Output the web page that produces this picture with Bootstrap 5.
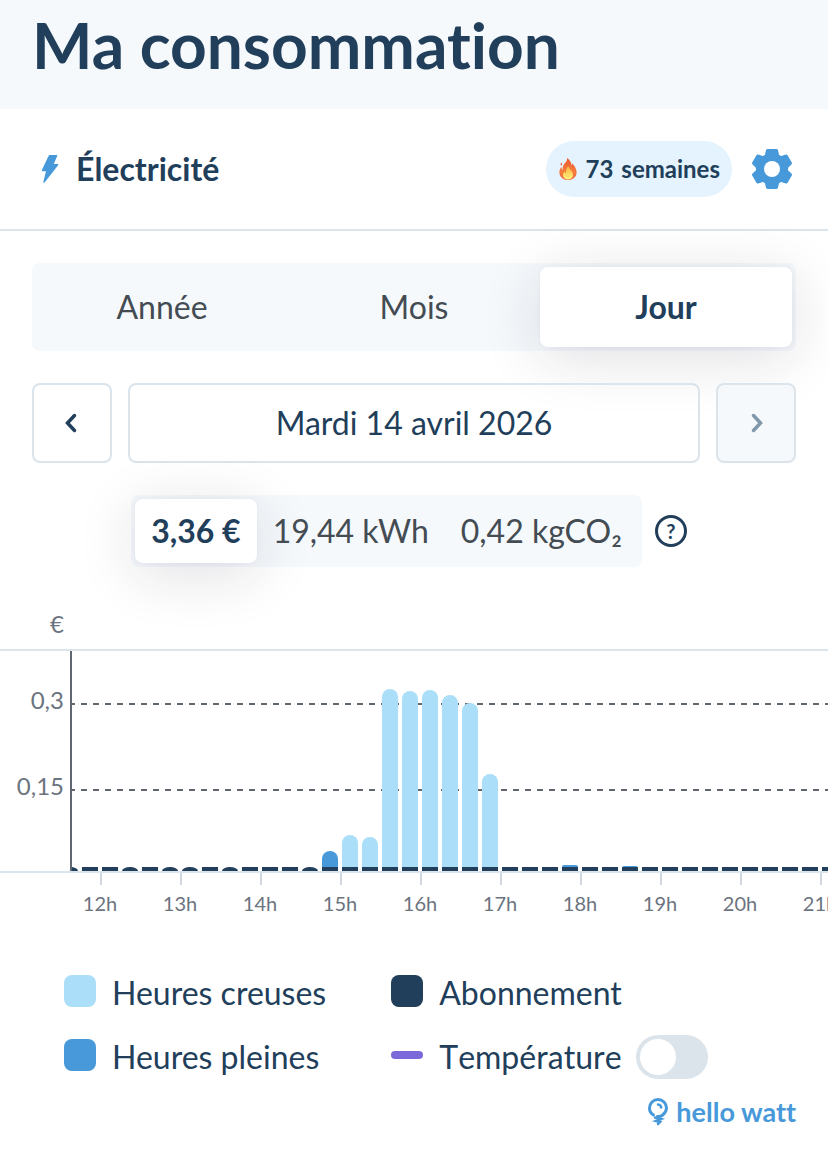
<!DOCTYPE html>
<html lang="fr">
<head>
<meta charset="utf-8">
<meta name="viewport" content="width=device-width, initial-scale=1">
<title>Ma consommation</title>
<link href="https://cdn.jsdelivr.net/npm/bootstrap@5.3.0/dist/css/bootstrap.min.css" rel="stylesheet">
<style>
  :root {
    --navy: #213e5a;
    --blue: #4799da;
    --sky: #abdef9;
    --mist: #f5f9fc;
    --line: #dbe4eb;
    --grey: #6b7480;
    --ink: #444c53;
    --lift: 0 0 4px rgba(30, 40, 60, .04), 0 10px 60px rgba(30, 30, 50, .14);
  }
  body { font-family: Lato, "Liberation Sans", sans-serif; color: var(--navy); font-size: 32px; line-height: 40px; font-variant-ligatures: none; overflow-x: hidden; }
  button { font: inherit; color: inherit; background: transparent; border: 0; padding: 0; }
  svg { display: block; flex: none; }
  .page-head { background: var(--mist); padding: 5px 32px 24px; }
  .page-head h1 { font-size: 64px; line-height: 80px; font-weight: 700; }
  .energy-head { height: 122px; padding: 0 32px; border-bottom: 2px solid var(--line); }
  .energy-head h2 { font-size: 32px; line-height: 40px; font-weight: 700; font-kerning: none; }
  .streak { height: 56px; padding: 0 12px; background: #e4f3fd; font-size: 24px; font-weight: 700; white-space: nowrap; }
  .panel-body { padding: 32px 32px 0; }
  .segments { background: var(--mist); border-radius: 8px; padding: 4px; color: var(--ink); }
  .segments button { border-radius: 8px; }
  .segments .active { background: #fff; color: var(--navy); font-weight: 700; box-shadow: var(--lift); }
  .period button { height: 80px; }
  .units button { height: 64px; padding: 0 16px; white-space: nowrap; }
  .boxed { height: 80px; border: 2px solid var(--line); border-radius: 8px; }
  .square { width: 80px; }
  .boxed:disabled { background: var(--mist); color: #7f98ac; position: relative; }
  .help { width: 32px; height: 32px; border: 3px solid var(--navy); font-size: 20px; line-height: 26px; font-weight: 700; margin: 0 10px 0 13px; }
  .chart { display: grid; grid-template-columns: 70px minmax(0, 1fr); color: var(--grey); font-size: 24px; line-height: 30px; margin-top: 42px; }
  .unit-name { grid-column: 1 / -1; height: 42px; border-bottom: 2px solid var(--line); }
  .unit-name span { display: block; width: 64px; text-align: right; }
  .y-labels { padding: 34px 6px 0 0; text-align: right; display: flex; flex-direction: column; gap: 56px; }
  .plot {
    height: 220px; border-left: 2px solid #5f6770; overflow: hidden;
    background:
      repeating-linear-gradient(90deg, #5f6770 0 6px, transparent 6px 12px) -3px 52px / 12px 2px repeat-x,
      repeating-linear-gradient(90deg, #5f6770 0 6px, transparent 6px 12px) -3px 138px / 12px 2px repeat-x;
  }
  .bars { height: 100%; gap: 4px; margin-left: -10px; }
  .bars i { flex: none; width: 16px; height: 4px; background: linear-gradient(var(--navy), var(--navy)) bottom / 100% 4px no-repeat var(--sky); }
  .bars .dome { border-radius: 8px 8px 0 0 / 4px 4px 0 0; }
  .bars .off, .bars .peak { border-radius: 8px 8px 0 0; }
  .bars .peak, .bars .trace { background-color: var(--blue); }
  .bars .trace { border-radius: 2px 2px 0 0; }
  .x-axis { grid-column: 1 / -1; border-top: 2px solid var(--line); padding-left: 60px; overflow: hidden; font-size: 20px; line-height: 24px; }
  .x-axis span { flex: none; width: 80px; text-align: center; }
  .x-axis span::before { content: ""; display: block; width: 2px; height: 12px; margin: 0 0 6px 40px; background: #cfd8e0; }
  .legend-grid { display: grid; grid-template-columns: auto auto; grid-auto-rows: 44px; justify-content: start; column-gap: 65px; row-gap: 20px; margin: 56px 32px 0 64px; }
  .swatch { flex: none; width: 32px; height: 32px; border-radius: 8px; margin: 0 16px 4px 0; }
  .swatch.dash { height: 8px; border-radius: 4px; background: #7b68d9; }
  .legend-grid label { font-kerning: none; }
  .legend-grid .form-check-input {
    width: 72px; height: 44px; margin: 0 0 0 14px; border: 0; float: none;
    background-color: var(--line); background-size: 44px 44px;
    background-image: url("data:image/svg+xml,%3csvg xmlns='http://www.w3.org/2000/svg' viewBox='0 0 44 44'%3e%3ccircle cx='22' cy='22' r='18' fill='%23fff'/%3e%3c/svg%3e");
  }
  .legend-grid .form-check-input:checked { background-color: var(--blue); }
  .brand { color: var(--blue); font-size: 27px; line-height: 32px; font-weight: 700; margin: 17px 32px 32px; }
</style>
</head>
<body>
<header class="page-head"><h1 class="m-0">Ma consommation</h1></header>
<main>
  <section class="energy-head d-flex align-items-center">
    <svg width="36" height="32" viewBox="0 0 36 32" fill="#4799da" aria-hidden="true"><path d="M17.800 2h6.700c.7 0 1 .5.700 1.100L21.800 11h3.700c.8 0 1 .7.600 1.300L12.600 29.500c-.6.700-1.500.3-1.300-.6L14 18.300h-3.200c-.8 0-1.200-.5-.9-1.300L16.500 2.900c.3-.6.700-.9 1.300-.9z"/></svg>
    <h2 class="m-0 ms-2">Électricité</h2>
    <div class="streak rounded-pill d-flex align-items-center gap-2 ms-auto">
      <svg width="20" height="24" viewBox="0 0 20 24" aria-hidden="true"><defs><linearGradient id="flame" x1="0" y1="0" x2="0" y2="1"><stop offset="0" stop-color="#ed5735"/><stop offset=".6" stop-color="#f47c3c"/><stop offset="1" stop-color="#ef6540"/></linearGradient><linearGradient id="core" x1="0" y1="0" x2="0" y2="1"><stop offset="0" stop-color="#fbb040"/><stop offset="1" stop-color="#fff27a"/></linearGradient></defs><path fill="url(#flame)" d="M9 1c3 2 4.500 4.500 4.500 7.500.6-.7.700-1.500.6-2.300C17 9 19 12.500 18.600 16c-.4 4.300-4 7-8.600 7s-8.200-2.700-8.600-7C1.200 13.500 2 11.500 3.300 9.700c.1 1.600.5 2.700 1.300 3.300C4.300 9.500 5.500 7.500 7.500 5.500 8.700 4.300 9.200 2.800 9 1z"/><path fill="#ed5735" d="M3.500 5.500c.8 1.200.6 2.200-.3 3.200-.9-1.100-.8-2.200.3-3.200z"/><path fill="url(#core)" d="M10.500 9c.2 3 4.800 5 4.600 9-.2 2.800-2.300 4.500-5 4.500S5 20.800 5 18.200c0-1.800.8-2.800 1.600-3.900.3 1.200.8 1.700 1.400 1.900C7.700 13 8.500 10.700 10.500 9z"/></svg>
      <span>73</span><span>semaines</span>
    </div>
    <button type="button" class="ms-3 p-1 me-n1" aria-label="Réglages">
      <svg width="40" height="40" viewBox="0 0 40 40" aria-hidden="true"><g fill="#4799da" stroke="#4799da" stroke-width="3" stroke-linejoin="round"><path d="M15.500 1.500h9l1.200 5.200 3.300 2 5.300-1.700 4.200 7.200-3.900 3.900v3.800l3.900 3.900-4.200 7.200-5.300-1.700-3.300 2-1.200 5.200h-9l-1.200-5.200-3.300-2L5.700 33l-4.200-7.200 3.900-3.900v-3.800l-3.900-3.900L5.700 7 11 8.700l3.300-2z"/></g><circle cx="20" cy="20" r="8" fill="#fff"/></svg>
    </button>
  </section>

  <section class="panel-body">
    <div class="segments period d-flex" role="group" aria-label="Période">
      <button type="button" class="col">Année</button>
      <button type="button" class="col">Mois</button>
      <button type="button" class="col active" aria-pressed="true">Jour</button>
    </div>
    <div class="d-flex gap-3 mt-4 pt-2">
      <button type="button" class="boxed square d-flex align-items-center justify-content-center" aria-label="Jour précédent"><svg width="24" height="24" viewBox="0 0 24 24" fill="none" stroke="currentColor" stroke-width="3.500" stroke-linecap="round" aria-hidden="true"><path d="M14.500 4.500 7.500 12l7 7.500"/></svg></button>
      <button type="button" class="boxed flex-grow-1">Mardi 14 avril 2026</button>
      <button type="button" class="boxed square d-flex align-items-center justify-content-center" aria-label="Jour suivant" disabled><svg width="24" height="24" viewBox="0 0 24 24" fill="none" stroke="currentColor" stroke-width="3.500" stroke-linecap="round" aria-hidden="true"><path d="m9.500 4.500 7 7.500-7 7.500"/></svg></button>
    </div>
    <div class="d-flex align-items-center justify-content-center mt-4 pt-2">
      <div class="segments units d-flex" role="group" aria-label="Unité">
        <button type="button" class="active" aria-pressed="true">3,36 €</button>
        <button type="button">19,44 kWh</button>
        <button type="button">0,42 kgCO₂</button>
      </div>
      <button type="button" class="help rounded-circle flex-shrink-0" aria-label="Aide">?</button>
    </div>
  </section>

  <section class="chart" aria-label="Consommation par quart d’heure">
    <div class="unit-name"><span>€</span></div>
    <div class="y-labels"><span>0,3</span><span>0,15</span></div>
    <div class="plot">
      <div class="bars d-flex align-items-end">
        <i class="dome"></i><i></i><i></i><i class="dome"></i><i></i><i class="dome"></i><i class="dome"></i><i></i><i class="dome"></i><i></i><i></i><i></i><i class="dome"></i>
        <i class="peak" style="height:20px"></i>
        <i class="off" style="height:36px"></i><i class="off" style="height:34px"></i>
        <i class="off" style="height:182px"></i><i class="off" style="height:180px"></i><i class="off" style="height:181px"></i><i class="off" style="height:176px"></i><i class="off" style="height:168px"></i><i class="off" style="height:97px"></i>
        <i></i><i></i><i></i><i class="trace" style="height:6px"></i><i></i><i></i><i class="trace" style="height:5px"></i>
        <i></i><i></i><i></i><i></i><i></i><i></i><i></i><i></i><i></i><i></i><i></i><i></i><i></i><i></i><i></i><i></i>
      </div>
    </div>
    <div class="x-axis d-flex"><span>12h</span><span>13h</span><span>14h</span><span>15h</span><span>16h</span><span>17h</span><span>18h</span><span>19h</span><span>20h</span><span>21h</span></div>
  </section>

  <section class="legend-grid">
    <div class="d-flex align-items-center"><span class="swatch" style="background:#abdef9"></span>Heures creuses</div>
    <div class="d-flex align-items-center"><span class="swatch" style="background:#213e5a"></span>Abonnement</div>
    <div class="d-flex align-items-center"><span class="swatch" style="background:#4799da"></span>Heures pleines</div>
    <div class="form-switch p-0 m-0 d-flex align-items-center"><span class="swatch dash"></span><label for="temp">Température</label><input class="form-check-input" type="checkbox" role="switch" id="temp"></div>
  </section>

  <footer class="brand d-flex justify-content-end align-items-center">
    <svg class="me-2" width="20" height="28" viewBox="0 0 20 28" fill="none" stroke="#4799da" stroke-width="3" stroke-linecap="round" aria-hidden="true"><path d="M5.500 17C3 15.500 1.500 13 1.500 10a8.500 8.500 0 0 1 17 0c0 3.500-2 5.500-3.800 7-1.400 1.200-2.700 1.800-5.200 1.500"/><path stroke-width="2.500" d="M10 6.500c2 .2 3 1.300 3.200 3M7 19.500l6 1.500-5 2 4 1-2 2"/></svg>
    <span>hello watt</span>
  </footer>
</main>
<script src="https://cdn.jsdelivr.net/npm/bootstrap@5.3.0/dist/js/bootstrap.bundle.min.js"></script>
</body>
</html>
